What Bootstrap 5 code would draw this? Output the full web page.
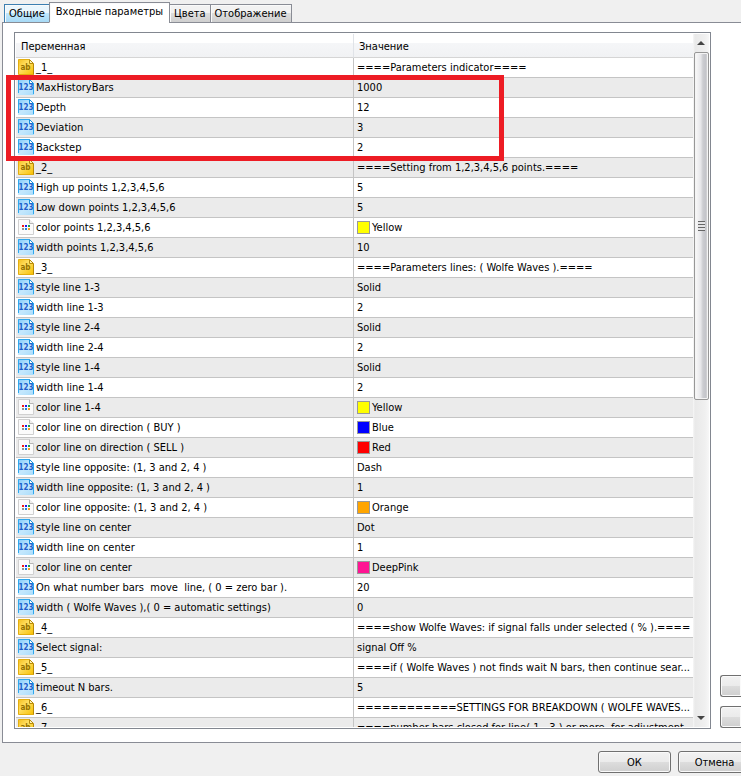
<!DOCTYPE html>
<html lang="ru">
<head>
<meta charset="utf-8">
<meta name="viewport" content="width=device-width, initial-scale=1">
<title>Входные параметры</title>
<link href="https://cdn.jsdelivr.net/npm/bootstrap@5.3.0/dist/css/bootstrap.min.css" rel="stylesheet">
<style>
  body { background: #f0f0f0; font: 11px/14px "DejaVu Sans Condensed", "Noto Sans", sans-serif; color: #000; }
  .dlg-tabs { height: 23px; padding: 2px 0 0 4px; margin-bottom: -1px; z-index: 1; border: 0; }
  .dlg-tabs .nav-link { height: 19px; padding: 2px 4px 0; border: 1px solid #898c95; border-radius: 0; color: #000; line-height: 14px; margin: 0 0 0 -1px; background: linear-gradient(#f2f2f2 0 50%, #dddddd 50%, #cfcfcf); box-shadow: inset 1px 1px #fafafa; }
  .dlg-tabs .nav-item:first-child .nav-link { margin-left: 0; border-color: #3c7fb1; border-bottom-color: #898c95; background: linear-gradient(#eaf6fd 0 50%, #bee6fd 50%, #a7d9f5); }
  .dlg-tabs .nav-link.active { height: 21px; padding: 2px 6px 0; color: #000; background: #fff; border-color: #898c95; border-bottom-color: #fff; }
  .tab-body { margin-left: 2px; padding: 9px 0 13px 11px; border: 1px solid #898c95; border-right: 0; background: #fff; }
  .list-frame { border: 1px solid #828790; padding: 1px; background: #fff; }
  .params { table-layout: fixed; width: 100%; border-collapse: separate; border-spacing: 0; }
  .params .name-col { width: 337px; }
  .params th { height: 24px; padding: 2px 5px 0; line-height: 14px; font-weight: 400; background: linear-gradient(#fff 0 40%, #f5f6f8 41%, #f1f2f4); border-bottom: 1px solid #d5d5d5; }
  .params th + th { border-left: 1px solid #e0e3e8; }
  .params td { height: 20px; padding: 0 0 0 2px; line-height: 19px; border-bottom: 1px solid #c4c4c4; white-space: pre; overflow: hidden; }
  .params td + td { border-left: 1px solid #c4c4c4; padding-left: 3px; }
  .params tbody tr:nth-child(even) { background: #ebebeb; }
  .params svg { width: 16px; height: 16px; margin: 1px 2px 0 0; vertical-align: top; }
  .swatch { display: inline-block; width: 13px; height: 13px; border: 1px solid #999; vertical-align: top; margin: 3px 2px 0 0; }
  .yellow { background: #ff0; } .blue { background: #00f; } .red { background: #f00; } .orange { background: orange; } .pink { background: #ff1493; }
  .vbar { width: 16px; background: linear-gradient(90deg, #f7f7f7, #e9e9e9 2px, #f0f0f0 12px, #f7f7f7); }
  .vbar button { border: 0; background: none; padding: 0; height: 18px; line-height: 0; }
  .thumb { height: 53%; margin-left: 1px; border: 1px solid #979797; border-radius: 2px; background: linear-gradient(90deg, #fafafa, #e6e6e9 45%, #cdced2 60%, #c4c5ca 80%, #ddd); box-shadow: inset 0 0 0 1px #f4f4f4; }
  .grip { width: 7px; height: 10px; background: repeating-linear-gradient(#666 0 1px, #e4e4e6 1px 3px); }
  .win-btn { height: 22px; padding: 1px 0 0; border: 1px solid #707070; border-radius: 3px; font-size: 11px; line-height: 18px; color: #000; background: linear-gradient(#f2f2f2, #ebebeb 50%, #ddd 50%, #cfcfcf); box-shadow: inset 0 0 0 1px #fafafa; }
  .side { width: 30px; padding: 0 0 1px 9px; gap: 9px; }
  .side .win-btn { border-right: 0; border-radius: 3px 0 0 3px; }
  .dlg-foot { padding: 8px 0 3px; gap: 7px; margin-right: -10px; }
  .dlg-foot .win-btn { width: 73px; }
  .marker { left: 6px; top: 75px; width: 67.2vw; height: 86px; border: 5px solid #ed1c24; z-index: 2; pointer-events: none; }
</style>
<script src="https://cdn.jsdelivr.net/npm/bootstrap@5.3.0/dist/js/bootstrap.bundle.min.js"></script>
</head>
<body class="vh-100 overflow-hidden position-relative d-flex flex-column">
<svg class="position-absolute" width="0" height="0" aria-hidden="true">
  <defs>
    <linearGradient id="gb" x1="0" y1="0" x2="1" y2="1"><stop offset="0" stop-color="#7cc9fa"/><stop offset=".5" stop-color="#c4e8fd"/><stop offset="1" stop-color="#a9dcfb"/></linearGradient>
    <linearGradient id="gy" x1="0" y1="0" x2="1" y2="1"><stop offset="0" stop-color="#f4bf1e"/><stop offset=".4" stop-color="#ffdf62"/><stop offset="1" stop-color="#f7c000"/></linearGradient>
  </defs>
</svg>
<svg class="d-none" aria-hidden="true">
  <symbol id="i-num" viewBox="0 0 16 16">
    <path d="M0 16V0H11.500L16 4.500V16Z" fill="url(#gb)"/>
    <path d="M.5 14V.5H11L15.500 5V15" fill="none" stroke="#2fa8ee"/>
    <path d="M11.500 .5V4.500H15.500Z" fill="#fff" stroke="#1493e0"/>
    <text x="8" y="11" font-family="DejaVu Sans Condensed, sans-serif" font-size="8" font-weight="700" text-anchor="middle" fill="#1d5fcb">123</text>
  </symbol>
  <symbol id="i-str" viewBox="0 0 16 16">
    <path d="M.5 15.500V.5H11L15.500 5V15.500Z" fill="url(#gy)" stroke="#e3ae10"/>
    <path d="M15.500 5V15.500" stroke="#b88a08"/>
    <path d="M11.500 .5V4.500H15.500Z" fill="#fff3b0" stroke="#b88a08"/>
    <text x="7.500" y="11" font-family="DejaVu Sans Condensed, sans-serif" font-size="8" font-weight="700" text-anchor="middle" fill="#937000">ab</text>
  </symbol>
  <symbol id="i-col" viewBox="0 0 16 16">
    <path d="M.5 15.500V.5H11L15.500 5V15.500Z" fill="#fbfbfb" stroke="#d0d0d0"/>
    <path d="M11.500 .5V4.500H15.500" fill="#eee" stroke="#b5b5b5"/>
    <path d="M4 6h2v2H4z" fill="#f01818"/><path d="M7 6h2v2H7z" fill="#1a1af0"/><path d="M10 6h2v2h-2z" fill="#13a04c"/>
    <path d="M4 9h2v2H4z" fill="#909090"/><path d="M7 9h2v2H7z" fill="#1f7fe0"/><path d="M10 9h2v2h-2z" fill="#f39a1d"/>
  </symbol>
</svg>

<ul class="nav nav-tabs dlg-tabs position-relative align-items-end flex-nowrap flex-shrink-0">
  <li class="nav-item"><a class="nav-link" href="#">Общие</a></li>
  <li class="nav-item"><a class="nav-link active" aria-current="page" href="#">Входные параметры</a></li>
  <li class="nav-item"><a class="nav-link" href="#">Цвета</a></li>
  <li class="nav-item"><a class="nav-link" href="#">Отображение</a></li>
</ul>

<main class="tab-body d-flex flex-fill overflow-hidden">
  <div class="list-frame d-flex flex-fill overflow-hidden">
    <div class="flex-fill overflow-hidden">
      <table class="params">
        <thead><tr><th class="name-col" scope="col">Переменная</th><th scope="col">Значение</th></tr></thead>
        <tbody>
          <tr><td><svg><use href="#i-str"/></svg>_1_</td><td>====Parameters indicator====</td></tr>
          <tr><td><svg><use href="#i-num"/></svg>MaxHistoryBars</td><td>1000</td></tr>
          <tr><td><svg><use href="#i-num"/></svg>Depth</td><td>12</td></tr>
          <tr><td><svg><use href="#i-num"/></svg>Deviation</td><td>3</td></tr>
          <tr><td><svg><use href="#i-num"/></svg>Backstep</td><td>2</td></tr>
          <tr><td><svg><use href="#i-str"/></svg>_2_</td><td>====Setting from 1,2,3,4,5,6 points.====</td></tr>
          <tr><td><svg><use href="#i-num"/></svg>High up points 1,2,3,4,5,6</td><td>5</td></tr>
          <tr><td><svg><use href="#i-num"/></svg>Low down points 1,2,3,4,5,6</td><td>5</td></tr>
          <tr><td><svg><use href="#i-col"/></svg>color points 1,2,3,4,5,6</td><td><span class="swatch yellow"></span>Yellow</td></tr>
          <tr><td><svg><use href="#i-num"/></svg>width points 1,2,3,4,5,6</td><td>10</td></tr>
          <tr><td><svg><use href="#i-str"/></svg>_3_</td><td>====Parameters lines: ( Wolfe Waves ).====</td></tr>
          <tr><td><svg><use href="#i-num"/></svg>style line 1-3</td><td>Solid</td></tr>
          <tr><td><svg><use href="#i-num"/></svg>width line 1-3</td><td>2</td></tr>
          <tr><td><svg><use href="#i-num"/></svg>style line 2-4</td><td>Solid</td></tr>
          <tr><td><svg><use href="#i-num"/></svg>width line 2-4</td><td>2</td></tr>
          <tr><td><svg><use href="#i-num"/></svg>style line 1-4</td><td>Solid</td></tr>
          <tr><td><svg><use href="#i-num"/></svg>width line 1-4</td><td>2</td></tr>
          <tr><td><svg><use href="#i-col"/></svg>color line 1-4</td><td><span class="swatch yellow"></span>Yellow</td></tr>
          <tr><td><svg><use href="#i-col"/></svg>color line on direction ( BUY )</td><td><span class="swatch blue"></span>Blue</td></tr>
          <tr><td><svg><use href="#i-col"/></svg>color line on direction ( SELL )</td><td><span class="swatch red"></span>Red</td></tr>
          <tr><td><svg><use href="#i-num"/></svg>style line opposite: (1, 3 and 2, 4 )</td><td>Dash</td></tr>
          <tr><td><svg><use href="#i-num"/></svg>width line opposite: (1, 3 and 2, 4 )</td><td>1</td></tr>
          <tr><td><svg><use href="#i-col"/></svg>color line opposite: (1, 3 and 2, 4 )</td><td><span class="swatch orange"></span>Orange</td></tr>
          <tr><td><svg><use href="#i-num"/></svg>style line on center</td><td>Dot</td></tr>
          <tr><td><svg><use href="#i-num"/></svg>width line on center</td><td>1</td></tr>
          <tr><td><svg><use href="#i-col"/></svg>color line on center</td><td><span class="swatch pink"></span>DeepPink</td></tr>
          <tr><td><svg><use href="#i-num"/></svg>On what number bars  move  line, ( 0 = zero bar ).</td><td>20</td></tr>
          <tr><td><svg><use href="#i-num"/></svg>width ( Wolfe Waves ),( 0 = automatic settings)</td><td>0</td></tr>
          <tr><td><svg><use href="#i-str"/></svg>_4_</td><td>====show Wolfe Waves: if signal falls under selected ( % ).====</td></tr>
          <tr><td><svg><use href="#i-num"/></svg>Select signal:</td><td>signal Off %</td></tr>
          <tr><td><svg><use href="#i-str"/></svg>_5_</td><td>====if ( Wolfe Waves ) not finds wait N bars, then continue sear...</td></tr>
          <tr><td><svg><use href="#i-num"/></svg>timeout N bars.</td><td>5</td></tr>
          <tr><td><svg><use href="#i-str"/></svg>_6_</td><td>============SETTINGS FOR BREAKDOWN ( WOLFE WAVES...</td></tr>
          <tr><td><svg><use href="#i-str"/></svg>_7_</td><td>====number bars closed for line( 1 - 3 ) or more, for adjustment...</td></tr>
        </tbody>
      </table>
    </div>
    <div class="vbar d-flex flex-column flex-shrink-0">
      <button type="button" aria-label="Вверх"><svg width="8" height="4"><path d="M0 4 4 0 8 4Z" fill="#444"/></svg></button>
      <div class="flex-fill">
        <div class="thumb d-flex align-items-center justify-content-center"><div class="grip"></div></div>
      </div>
      <button type="button" aria-label="Вниз"><svg width="8" height="4"><path d="M0 0 4 4 8 0Z" fill="#444"/></svg></button>
    </div>
  </div>
  <div class="side d-flex flex-column justify-content-end flex-shrink-0">
    <button class="btn win-btn" type="button" aria-label="Загрузить"></button>
    <button class="btn win-btn" type="button" aria-label="Сохранить"></button>
  </div>
</main>

<footer class="dlg-foot d-flex justify-content-end flex-shrink-0">
  <button class="btn win-btn" type="button">ОК</button>
  <button class="btn win-btn" type="button">Отмена</button>
</footer>
<div class="marker position-absolute"></div>
</body>
</html>
